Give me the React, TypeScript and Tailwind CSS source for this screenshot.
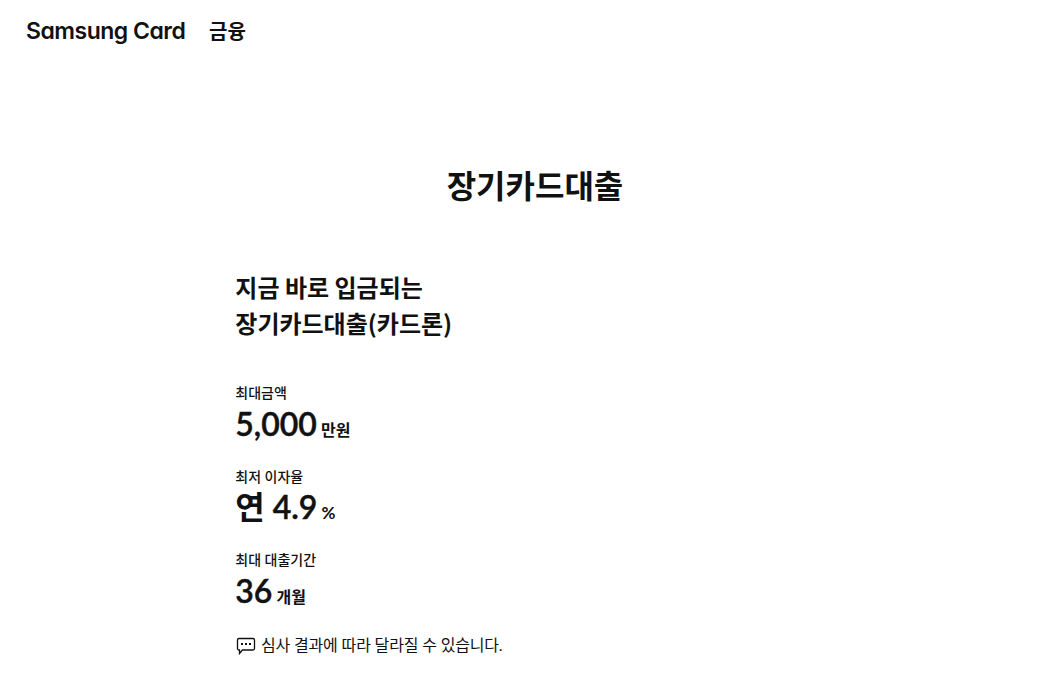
const terms = [
  { label: '최대금액', value: '5,000', unit: '만원' },
  { label: '최저 이자율', prefix: '연', value: '4.9', unit: '%' },
  { label: '최대 대출기간', value: '36', unit: '개월' },
];

export default function App() {
  return (
    <div className="min-h-screen overflow-hidden bg-white font-['Lato','Noto_Sans_CJK_KR',sans-serif] text-[#111]">
      <header className="flex h-[62px] items-center gap-6 pl-[26px]">
        <a
          href="#"
          className="w-[159px] font-['Inter',sans-serif] text-[23px] leading-none font-semibold tracking-[-0.5px] whitespace-nowrap [font-feature-settings:'cv11']"
        >
          Samsung Card
        </a>
        <a href="#" className="text-xl font-bold">금융</a>
      </header>
      <main>
        <h1 className="mt-[100px] ml-[21px] text-center text-[32px] leading-[48px] font-bold">장기카드대출</h1>
        <section className="mt-[59px] ml-[235.3px]">
          <h2 className="font-['Noto_Sans_CJK_KR',sans-serif] text-2xl leading-9 font-bold">
            지금 바로 입금되는
            <br />
            장기카드대출(카드론)
          </h2>
          <dl className="mt-[42px] flex flex-col gap-5">
            {terms.map((term) => (
              <div key={term.label} className="h-[63.5px]">
                <dt className="text-sm leading-5 font-medium">{term.label}</dt>
                <dd className="-mt-[1.1px] flex items-baseline gap-1 text-[32px] leading-[44px] font-semibold">
                  <span>
                    {term.prefix && <>{term.prefix} </>}
                    <span className="[-webkit-text-stroke:0.45px_#111]">{term.value}</span>
                  </span>
                  <span className={term.unit === '%' ? 'text-[17px] font-bold' : 'text-base'}>{term.unit}</span>
                </dd>
              </div>
            ))}
          </dl>
          <p className="mt-[19px] flex items-center gap-[5px] text-base leading-6 tracking-[-0.17px]">
            <svg className="ml-[0.7px] h-5 w-5" viewBox="0 0 20 20" fill="none" stroke="#111" strokeWidth="1.3">
              <path d="M3 3.5h14A1.5 1.5 0 0 1 18.5 5v8.500a1.500 1.500 0 0 1-1.500 1.500H6.500L3.500 18.500V15H3A1.500 1.500 0 0 1 1.500 13.500V5A1.500 1.500 0 0 1 3 3.500z" />
              <path d="M5 9h2M9 9h2M13 9h2" strokeWidth="1.8" />
            </svg>
            심사 결과에 따라 달라질 수 있습니다.
          </p>
        </section>
      </main>
    </div>
  );
}
